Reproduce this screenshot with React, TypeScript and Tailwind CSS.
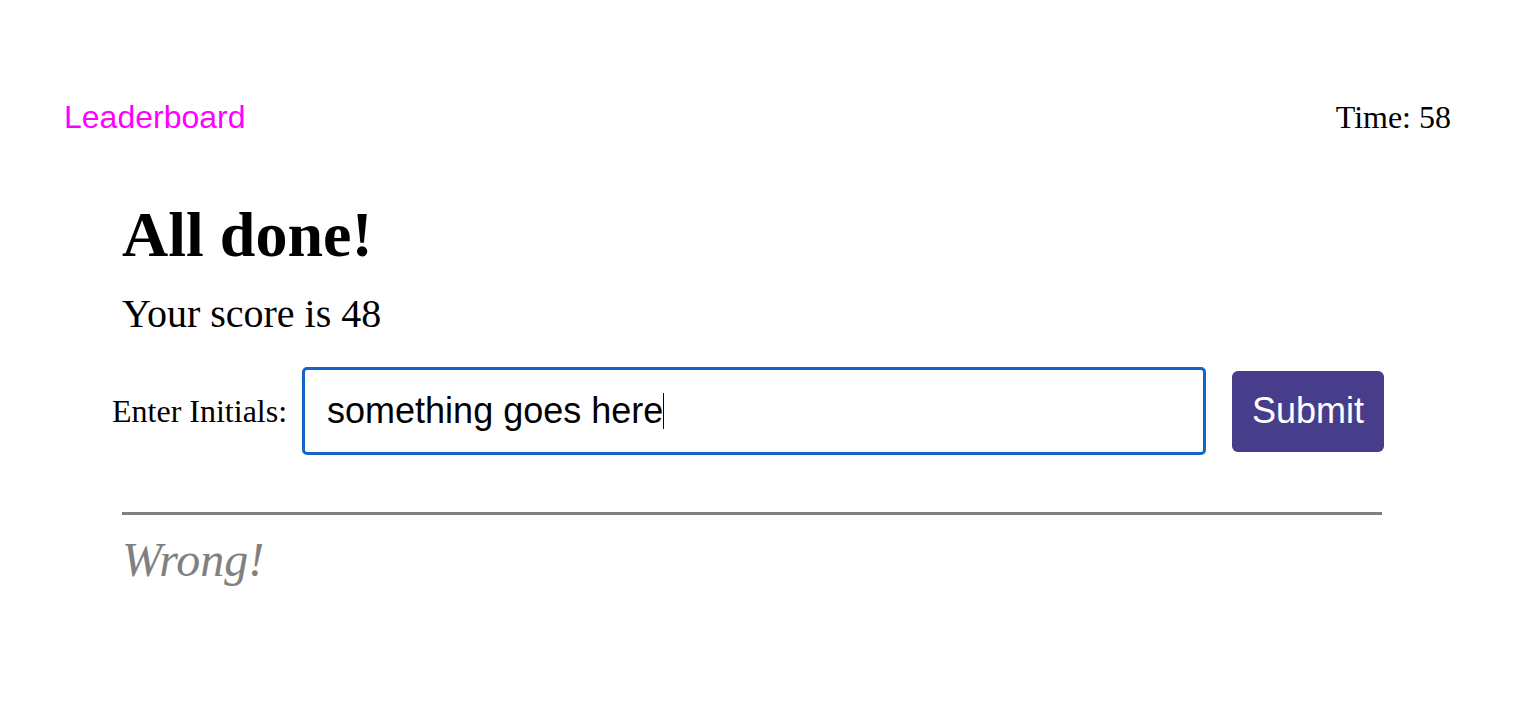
export default function App() {
  return (
    <div className="min-h-screen bg-white font-['Liberation_Serif',serif] text-black">
      <header className="flex items-baseline justify-between pl-16 pr-[71px] pt-[101px]">
        <a className="font-['Liberation_Sans',Arial,sans-serif] text-[32px] leading-none text-[#ff00ff]">Leaderboard</a>
        <span className="text-[32px] leading-none">Time: 58</span>
      </header>

      <main className="ml-[122px] w-[1260px]">
        <h1 className="mt-[70px] text-[64px] font-bold leading-none">All done!</h1>
        <p className="mt-[27px] text-[40px] leading-none">Your score is 48</p>

        <form className="-ml-[10px] mt-[33px] flex items-center" onSubmit={(e) => e.preventDefault()}>
          <label className="shrink-0 whitespace-nowrap text-[32px] leading-none">Enter Initials:</label>
          <div className="relative ml-[15px] shrink-0">
            <input
              defaultValue="something goes here"
              className="h-[88px] w-[904px] rounded-[5px] border-[3px] border-[#1565c6] pl-[22px] font-['Liberation_Sans',Arial,sans-serif] text-[36px] text-black outline-none"
            />
            <span className="pointer-events-none absolute left-[361px] top-[26px] h-[36px] w-px bg-black" />
          </div>
          <button className="ml-[26px] h-[81px] w-[152px] shrink-0 rounded-md bg-[#483d8b] font-['Liberation_Sans',Arial,sans-serif] text-[36px] text-white">
            Submit
          </button>
        </form>

        <div className="mt-[57px] border-t-[3px] border-[#808080]" />
        <p className="mt-[21px] text-[48px] italic leading-none text-[#808080]">Wrong!</p>
      </main>
    </div>
  )
}
